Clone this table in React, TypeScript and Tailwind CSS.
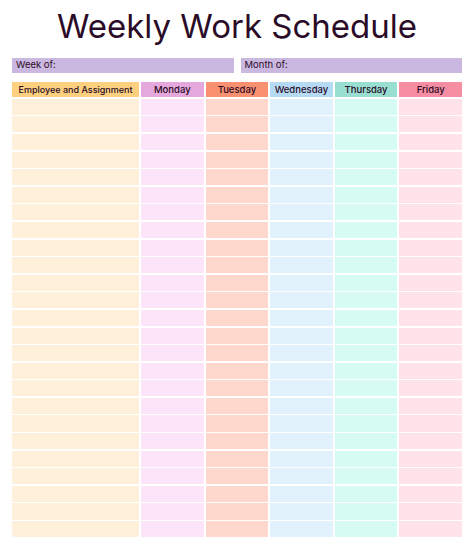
import React from "react";

const days = [
  { name: "Monday", head: "bg-[#e5a8dc]", cell: "bg-[#fde5f9]" },
  { name: "Tuesday", head: "bg-[#f9906f]", cell: "bg-[#fed8cd]" },
  { name: "Wednesday", head: "bg-[#b5dbf4]", cell: "bg-[#e1f2fd]" },
  { name: "Thursday", head: "bg-[#99dfd1]", cell: "bg-[#d6fbf3]" },
  { name: "Friday", head: "bg-[#f68da2]", cell: "bg-[#fee3e9]" },
];

const rows = Array.from({ length: 25 }, (_, i) => i);

const WeeklySchedule = () => {
  return (
    <div className="w-[474px] h-[551px] bg-white px-[12px] text-[#2b0c28] font-['Inter','Liberation_Sans',sans-serif]">
      <h1 className="pt-[6px] text-center text-[33px] leading-[40px] font-normal">
        Weekly Work Schedule
      </h1>

      <div className="mt-[12px] flex gap-[7px]">
        <div className="flex-1 h-[14.5px] bg-[#cbb8e1] pl-[4px] text-[9.5px] leading-[14.5px]">
          Week of:
        </div>
        <div className="flex-1 h-[14.5px] bg-[#cbb8e1] pl-[4px] text-[9.5px] leading-[14.5px]">
          Month of:
        </div>
      </div>

      <div className="mt-[9px] grid grid-cols-[127px_repeat(5,1fr)] gap-x-[2px]">
        <div className="h-[15.6px] bg-[#fcd07e] text-center text-[9px] leading-[15.6px] font-medium">
          Employee and Assignment
        </div>
        {days.map((d) => (
          <div
            key={d.name}
            className={`${d.head} h-[15.6px] text-center text-[9.5px] leading-[15.6px] font-medium`}
          >
            {d.name}
          </div>
        ))}
      </div>

      <div className="mt-[1.7px] grid grid-cols-[127px_repeat(5,1fr)] gap-x-[2px]">
        <div className="flex flex-col gap-[1.5px] rounded-b-[3px] overflow-hidden">
          {rows.map((r) => (
            <div key={r} className="h-[16.1px] bg-[#fff0dc]" />
          ))}
        </div>
        {days.map((d) => (
          <div key={d.name} className="flex flex-col gap-[1.5px]">
            {rows.map((r) => (
              <div key={r} className={`${d.cell} h-[16.1px]`} />
            ))}
          </div>
        ))}
      </div>
    </div>
  );
};

export default function App() {
  return <WeeklySchedule />;
}
